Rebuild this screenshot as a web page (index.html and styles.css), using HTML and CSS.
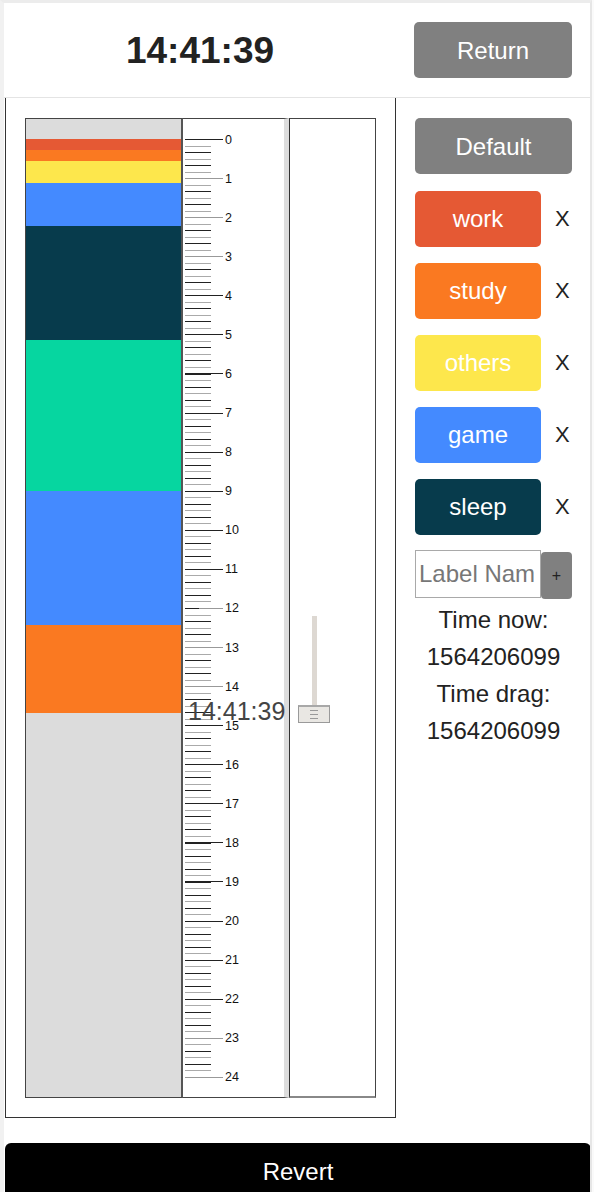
FILE: index.html
```html
<!DOCTYPE html>
<html lang="en">
<head>
<meta charset="utf-8">
<title>Timeline</title>
<link rel="stylesheet" href="styles.css">
</head>
<body>
<div class="app">
  <header class="top">
    <div class="clock">14:41:39</div>
    <button class="btn btn-return">Return</button>
  </header>
  <main class="main">
    <section class="board">
      <div class="chart">
        <div class="bars">
          <div class="seg seg-empty" style="height:20px"></div>
          <div class="seg c-work" style="height:11px"></div>
          <div class="seg c-study" style="height:11px"></div>
          <div class="seg c-others" style="height:22px"></div>
          <div class="seg c-game" style="height:43px"></div>
          <div class="seg c-sleep" style="height:114px"></div>
          <div class="seg c-green" style="height:151px"></div>
          <div class="seg c-game" style="height:134px"></div>
          <div class="seg c-study" style="height:88px"></div>
          <div class="seg seg-empty seg-rest"></div>
        </div>
        <div class="ruler">
          <div class="scale">
            <div class="mark"><span class="major"></span><span class="num">0</span></div>
            <div class="mark"><span class="major gray"></span><span class="num">1</span></div>
            <div class="mark"><span class="major gray"></span><span class="num">2</span></div>
            <div class="mark"><span class="major gray"></span><span class="num">3</span></div>
            <div class="mark"><span class="major"></span><span class="num">4</span></div>
            <div class="mark"><span class="major"></span><span class="num">5</span></div>
            <div class="mark"><span class="major"></span><span class="num">6</span></div>
            <div class="mark"><span class="major"></span><span class="num">7</span></div>
            <div class="mark"><span class="major"></span><span class="num">8</span></div>
            <div class="mark"><span class="major"></span><span class="num">9</span></div>
            <div class="mark"><span class="major"></span><span class="num">10</span></div>
            <div class="mark"><span class="major"></span><span class="num">11</span></div>
            <div class="mark"><span class="major gray short"></span><span class="num">12</span></div>
            <div class="mark"><span class="major gray"></span><span class="num">13</span></div>
            <div class="mark"><span class="major gray"></span><span class="num">14</span></div>
            <div class="mark"><span class="major"></span><span class="num">15</span></div>
            <div class="mark"><span class="major"></span><span class="num">16</span></div>
            <div class="mark"><span class="major"></span><span class="num">17</span></div>
            <div class="mark"><span class="major"></span><span class="num">18</span></div>
            <div class="mark"><span class="major"></span><span class="num">19</span></div>
            <div class="mark"><span class="major"></span><span class="num">20</span></div>
            <div class="mark"><span class="major"></span><span class="num">21</span></div>
            <div class="mark"><span class="major"></span><span class="num">22</span></div>
            <div class="mark"><span class="major gray"></span><span class="num">23</span></div>
            <div class="mark"><span class="major gray"></span><span class="num">24</span></div>
          </div>
        </div>
        <div class="slider-col">
          <div class="track"></div>
          <div class="thumb"><span></span><span></span><span></span></div>
        </div>
        <div class="drag-time">14:41:39</div>
      </div>
    </section>
    <aside class="side">
      <button class="btn btn-default">Default</button>
      <div class="labels">
        <div class="label-row"><button class="btn tag c-work">work</button><span class="del">X</span></div>
        <div class="label-row"><button class="btn tag c-study">study</button><span class="del">X</span></div>
        <div class="label-row"><button class="btn tag c-others">others</button><span class="del">X</span></div>
        <div class="label-row"><button class="btn tag c-game">game</button><span class="del">X</span></div>
        <div class="label-row"><button class="btn tag c-sleep">sleep</button><span class="del">X</span></div>
      </div>
      <div class="add-row">
        <input class="label-input" type="text" placeholder="Label Name">
        <button class="btn btn-add">+</button>
      </div>
      <div class="info">
        <div>Time now:</div>
        <div>1564206099</div>
        <div>Time drag:</div>
        <div>1564206099</div>
      </div>
    </aside>
  </main>
  <button class="btn revert">Revert</button>
</div>
</body>
</html>
```

FILE: styles.css
```css
* { box-sizing: border-box; }

html, body {
  margin: 0;
  padding: 0;
  background: #fafafa;
}

body {
  font-family: "Liberation Sans", Arial, sans-serif;
  color: #222;
}

.app {
  width: 592px;
  height: 1192px;
  overflow: hidden;
  background: #fff;
  border-top: 3px solid #ececec;
  border-left: 4px solid #f1f1f1;
  border-right: 2px solid #e6e6e6;
}

.btn {
  font-family: "Liberation Sans", Arial, sans-serif;
  font-size: 24px;
  color: #fff;
  border: none;
  border-radius: 5px;
  padding: 0;
  cursor: pointer;
}

/* header */
.top {
  height: 95px;
  display: flex;
  align-items: center;
  border-bottom: 1px solid #e4e4e4;
}

.clock {
  width: 392px;
  text-align: center;
  font-size: 37px;
  font-weight: bold;
  color: #222;
  padding-top: 2px;
}

.btn-return {
  margin-left: auto;
  margin-right: 18px;
  width: 158px;
  height: 56px;
  background: #808080;
  padding-top: 2px;
}

/* main */
.main {
  display: flex;
  align-items: flex-start;
}

.board {
  width: 391px;
  height: 1020px;
  margin-left: 1px;
  padding: 20px 19px 20px 19px;
  border-left: 1px solid #333;
  border-right: 1px solid #333;
  border-bottom: 1px solid #333;
}

.chart {
  position: relative;
  display: flex;
  height: 980px;
}

.bars {
  width: 158px;
  height: 980px;
  display: flex;
  flex-direction: column;
  border: 1px solid #444;
  border-right: 2px solid #555;
  background: #dcdcdc;
}

.seg { flex: none; }
.seg-empty { background: #dcdcdc; }
.seg-rest { flex: 1; }

.c-work { background: #e55934; }
.c-study { background: #fa7921; }
.c-others { background: #fde74c; }
.c-game { background: #448aff; }
.c-sleep { background: #073b4c; }
.c-green { background: #06d6a0; }

.ruler {
  width: 106px;
  height: 980px;
  border-top: 1px solid #444;
  border-bottom: 1px solid #444;
  border-right: 5px solid #dddddd;
  padding-top: 20px;
}

.scale {
  height: 939px;
  display: flex;
  flex-direction: column;
  justify-content: space-between;
  background-image: repeating-linear-gradient(to bottom,
    #222 0, #222 1px, transparent 1px, transparent 6.5px,
    #aaa 6.5px, #aaa 7.5px, transparent 7.5px, transparent 13.028px);
  background-size: 26px 100%;
  background-repeat: no-repeat;
  background-position: 2px 0;
}

.mark {
  height: 1px;
  display: flex;
  align-items: center;
}

.major {
  display: block;
  width: 38px;
  height: 1px;
  margin-left: 2px;
  background: #222;
}

.major.gray { background: #999; }
.major.short { width: 24px; margin-left: 16px; }

.num {
  font-size: 12.5px;
  line-height: 14px;
  margin-left: 2px;
  color: #111;
}

.slider-col {
  flex: 1;
  height: 980px;
  border-top: 1px solid #444;
  border-left: 1px solid #333;
  border-right: 1px solid #444;
  border-bottom: 2px solid #888;
  display: flex;
  flex-direction: column;
  align-items: flex-start;
  padding-top: 497px;
  padding-left: 8px;
}

.track {
  width: 5px;
  height: 90px;
  margin-left: 14px;
  background: #ddd8d2;
}

.thumb {
  width: 32px;
  height: 18px;
  margin-top: -1px;
  border: 1px solid #9a9a9a;
  border-top: 2px solid #a8a8a8;
  background: #e9e7e3;
  display: flex;
  flex-direction: column;
  align-items: center;
  justify-content: center;
  gap: 3px;
}

.thumb span {
  display: block;
  width: 8px;
  height: 1px;
  background: #999;
}

.drag-time {
  position: absolute;
  left: 163px;
  top: 581px;
  font-size: 25px;
  line-height: 25px;
  color: #444;
  white-space: nowrap;
}

/* side panel */
.side {
  width: 194px;
  padding: 20px 18px 0 19px;
}

.btn-default {
  display: block;
  width: 157px;
  height: 56px;
  background: #808080;
  padding-top: 2px;
}

.labels {
  margin-top: 17px;
  display: flex;
  flex-direction: column;
  gap: 16px;
}

.label-row {
  display: flex;
  align-items: center;
}

.tag {
  width: 126px;
  height: 56px;
}

.del {
  margin-left: 14px;
  font-size: 22px;
  color: #222;
}

.add-row {
  margin-top: 15px;
  display: flex;
  align-items: flex-start;
}

.label-input {
  width: 126px;
  height: 48px;
  border: 1px solid #a9a9a9;
  padding: 0 6px 0 3px;
  font-family: "Liberation Sans", Arial, sans-serif;
  font-size: 24px;
  color: #222;
  outline: none;
}

.label-input::placeholder { color: #777; }

.btn-add {
  width: 31px;
  height: 47px;
  margin-top: 2px;
  background: #808080;
  border-radius: 4px;
  color: #222;
  font-size: 16px;
}

.info {
  margin-top: 2px;
  text-align: center;
  font-size: 24px;
  line-height: 37px;
  color: #222;
}

/* revert */
.revert {
  display: block;
  width: 586px;
  height: 60px;
  margin-top: 25px;
  margin-left: 1px;
  background: #000;
  border-radius: 6px;
  padding-bottom: 2px;
}
```
